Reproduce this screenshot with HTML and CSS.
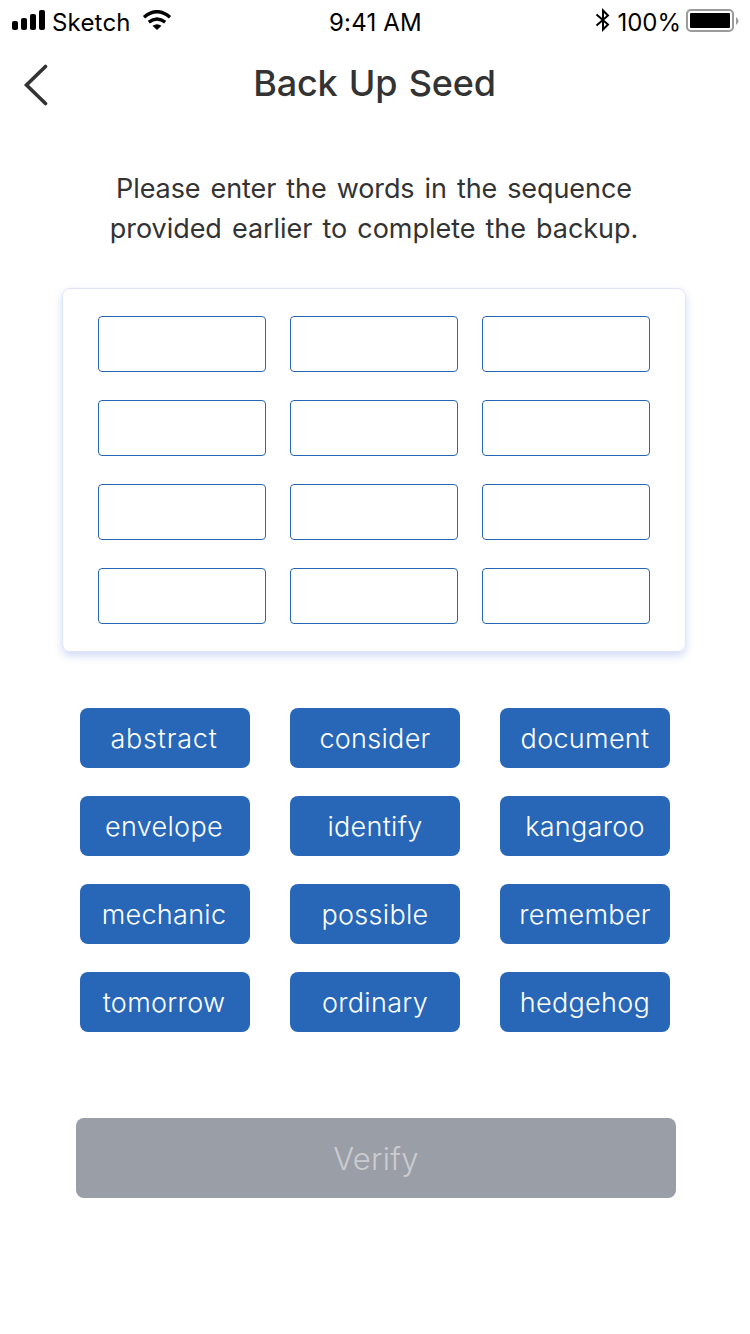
FILE: index.html
```html
<!DOCTYPE html>
<html lang="en">
<head>
<meta charset="utf-8">
<title>Back Up Seed</title>
<link rel="stylesheet" href="styles.css">
</head>
<body>
<div class="status">
  <div class="side">
    <svg class="signal" width="34" height="20" viewBox="0 0 34 20"><rect x="0" y="11" width="6" height="9" rx="2"/><rect x="9" y="8" width="6" height="12" rx="2"/><rect x="18" y="4" width="6" height="16" rx="2"/><rect x="27" y="0" width="6" height="20" rx="2"/></svg>
    <span class="t-carrier">Sketch</span>
    <svg class="wifi" width="30" height="21" viewBox="0 0 30 21" fill="none" stroke="#000" stroke-width="3.4"><path d="M2 7.200Q15-3.800 28 7.200M6.800 12.200Q15 5.800 23.200 12.200"/><path d="M15 20l-4.500-4.200Q15 12.500 19.500 15.800z" fill="#000" stroke="none"/></svg>
  </div>
  <span class="t-time">9:41 AM</span>
  <div class="side right">
    <svg class="bt" width="16" height="24" viewBox="0 0 16 24" fill="none" stroke="#000" stroke-width="2"><path d="M1.500 6.500L13 16.500 8 21.500V2.500l5 5L1.500 17.500"/></svg>
    <span class="t-pct">100%</span>
    <svg class="battery" width="54" height="24" viewBox="0 0 54 24"><rect x="1" y="1" width="46" height="21" rx="4" fill="none" stroke="#9b9b9b" stroke-width="2"/><rect x="4" y="4" width="40" height="15" rx="1"/><path d="M50 8q5 4 0 8z" fill="#9b9b9b"/></svg>
  </div>
</div>
<header class="nav">
  <svg class="back" width="26" height="42" viewBox="0 0 26 42" fill="none" stroke="#333" stroke-width="3.600" stroke-linecap="round"><path d="M22.500 2.500L3.500 21l19 18.500"/></svg>
  <h1 class="t-title">Back Up Seed</h1>
</header>
<main>
  <p class="intro">Please enter the words in the sequence<br><span class="second">provided earlier to complete the backup.</span></p>
  <div class="slots"><i></i><i></i><i></i><i></i><i></i><i></i><i></i><i></i><i></i><i></i><i></i><i></i></div>
  <div class="words">
    <button class="loose">abstract</button><button>consider</button><button>document</button>
    <button>envelope</button><button>identify</button><button>kangaroo</button>
    <button>mechanic</button><button>possible</button><button>remember</button>
    <button>tomorrow</button><button>ordinary</button><button>hedgehog</button>
  </div>
  <button class="verify">Verify</button>
</main>
</body>
</html>
```

FILE: styles.css
```css
* { box-sizing: border-box; }
body { margin: 0; width: 750px; height: 1334px; background: #fff; color: #333; font-family: Inter, sans-serif; overflow: hidden; }
svg { display: block; flex: none; }
.status { height: 40px; display: grid; grid-template-columns: 1fr auto 1fr; padding: 0 11px 0 12px; color: #000; font: 24px/46px Inter, sans-serif; }
.side { display: flex; height: 40px; }
.right { justify-content: flex-end; margin-right: -1px; }
.t-time { letter-spacing: .2px; }
.t-carrier { letter-spacing: .2px; }
.signal { margin: 10px 6px 0 0; }
.wifi { margin: 10px 0 0 11px; }
.bt { margin: 8px 6px 0 0; }
.battery { margin: 9px 0 0 5px; }
.nav { height: 88px; position: relative; display: flex; justify-content: center; }
.back { position: absolute; left: 23px; top: 24px; }
.t-title { margin: 0; padding-right: 1px; font-size: 36px; font-weight: 500; line-height: 87px; letter-spacing: -.2px; word-spacing: 2px; }
.intro { margin: 40px 0 0; padding: 1px 2px 0 0; height: 80px; text-align: center; font-size: 27px; font-weight: 400; line-height: 40px; letter-spacing: -.08px; word-spacing: 2.5px; }
.second { letter-spacing: -.03px; }
.slots { width: 624px; height: 364px; margin: 40px 0 0 62px; padding: 27px 35px; border-radius: 8px; border: 1px solid #dfe4fa; box-shadow: 0 4px 8px rgba(50,90,210,.22); display: grid; grid-template: repeat(4, 56px) / repeat(3, 168px); gap: 28px 24px; }
.slots i { border: 1px solid #2867b8; border-radius: 4px; }
.words { margin: 56px 0 0 80px; display: grid; grid-template: repeat(4, 60px) / repeat(3, 170px); gap: 28px 40px; }
button { border: 0; padding: 2px 0 0; border-radius: 8px; background: #2867b8; color: #fff; font: 300 27px/58px Inter, sans-serif; letter-spacing: .3px; }
.words button:nth-child(3n + 1) { padding-right: 2px; }
.words .loose { letter-spacing: .8px; }
.verify { display: block; margin: 86px 0 0 76px; width: 600px; height: 80px; font-size: 31px; line-height: 78px; background: #9a9ea6; color: #cbccd0; }
```
